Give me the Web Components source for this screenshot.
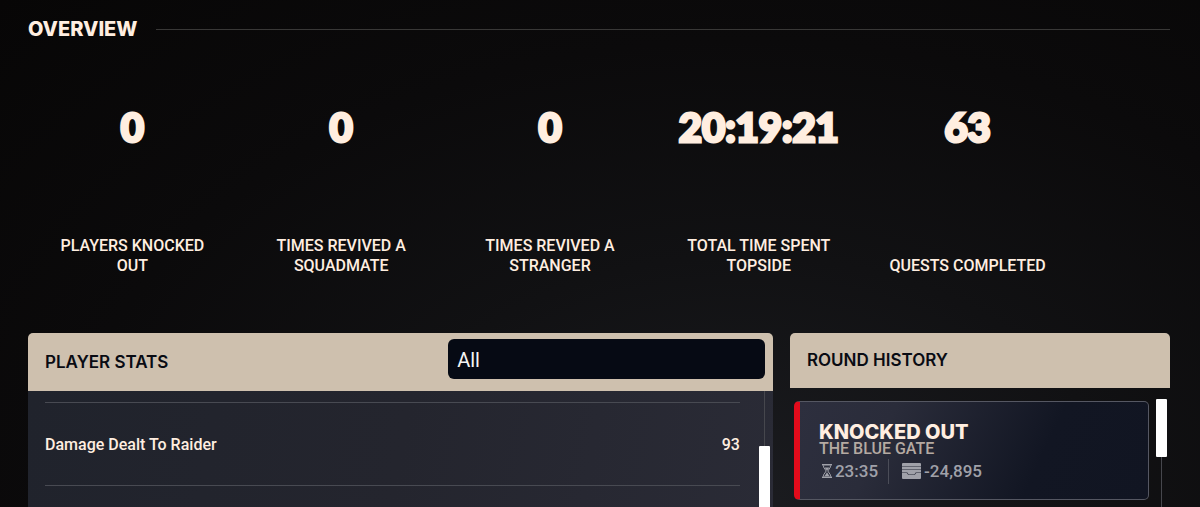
<!DOCTYPE html>
<html lang="en">
<head>
<meta charset="utf-8">
<meta name="viewport" content="width=device-width, initial-scale=1">
<title>Overview</title>
<style>
    :root {
        --cream: #ffeee0;
        --sand: #cec0ae;
        --ink: #090b13;
        --line: #484a52;
        --title-font: Inter, "Open Sans", sans-serif;
        --number-font: Lato, "Open Sans", sans-serif;
        --text-font: Roboto, "Noto Sans", sans-serif;
    }
    body {
        margin: 0;
        height: 100vh;
        overflow: hidden;
        color: var(--cream);
        background: radial-gradient(ellipse at 62% 100%, #1b1c20 0%, #111113 35%, #0b0a0b 65%, #070606 100%);
        font-family: var(--text-font);
    }
</style>
</head>
<body>
<profile-page>
    <section-title>OVERVIEW</section-title>
    <stat-list slot="stats">
        <stat-tile value="0">PLAYERS KNOCKED OUT</stat-tile>
        <stat-tile value="0">TIMES REVIVED A SQUADMATE</stat-tile>
        <stat-tile value="0">TIMES REVIVED A STRANGER</stat-tile>
        <stat-tile value="20:19:21">TOTAL TIME SPENT TOPSIDE</stat-tile>
        <stat-tile value="63">QUESTS COMPLETED</stat-tile>
    </stat-list>
    <player-stats slot="panels"></player-stats>
    <round-history slot="panels">
        <round-card result="KNOCKED OUT" map="THE BLUE GATE" time="23:35" loot="-24,895"></round-card>
    </round-history>
</profile-page>

<script>
// --- <profile-page> ---
class ProfilePage extends HTMLElement {
    constructor() {
        super();
        this.attachShadow({ mode: 'open' }).innerHTML = `
            <style>
                :host { display: flex; flex-direction: column; height: 100%; box-sizing: border-box; padding: 16px 30px 0 28px; }
                .panels { flex: 1; display: grid; grid-template-columns: 1.96fr 1fr; gap: 17px; margin-top: 57px; min-height: 0; }
            </style>
            <slot></slot>
            <slot name="stats"></slot>
            <div class="panels"><slot name="panels"></slot></div>
        `;
    }
}
customElements.define('profile-page', ProfilePage);

// --- <section-title>: heading with a rule that fills the row ---
class SectionTitle extends HTMLElement {
    constructor() {
        super();
        this.attachShadow({ mode: 'open' }).innerHTML = `
            <style>
                :host { display: flex; align-items: center; gap: 18px; }
                h1 { margin: 0; font: 800 20px/26px var(--title-font); }
                hr { flex: 1; margin: 0; border: 0; border-top: 1px solid #393837; }
            </style>
            <h1><slot></slot></h1>
            <hr>
        `;
    }
}
customElements.define('section-title', SectionTitle);

// --- <stat-list> and <stat-tile> ---
class StatList extends HTMLElement {
    constructor() {
        super();
        this.attachShadow({ mode: 'open' }).innerHTML = `
            <style>
                :host { display: grid; grid-template-columns: repeat(5, minmax(0, 1fr)); padding: 60px 98px 0 0; }
            </style>
            <slot></slot>
        `;
    }
}
customElements.define('stat-list', StatList);

class StatTile extends HTMLElement {
    constructor() {
        super();
        this.attachShadow({ mode: 'open' });
    }

    connectedCallback() {
        this.shadowRoot.innerHTML = `
            <style>
                :host { display: flex; flex-direction: column; justify-content: space-between; height: 174px; padding: 0 24px; text-align: center; }
                .value { font: 900 40px/50px var(--number-font); -webkit-text-stroke: 3px currentColor; }
                .label { font: 500 16px/20px var(--text-font); }
            </style>
            <div class="value">${this.getAttribute('value')}</div>
            <div class="label"><slot></slot></div>
        `;
    }
}
customElements.define('stat-tile', StatTile);

// --- <scroll-rail>: thin track with a white thumb ---
class ScrollRail extends HTMLElement {
    constructor() {
        super();
        this.attachShadow({ mode: 'open' }).innerHTML = `
            <style>
                :host { display: block; width: 11px; background: linear-gradient(#46474d, #46474d) center / 1px 100% no-repeat; }
                .thumb { height: var(--thumb-size, 58px); background: #fff; border-radius: 1px; }
            </style>
            <div class="thumb"></div>
        `;
    }
}
customElements.define('scroll-rail', ScrollRail);

// --- <player-stats> ---
class PlayerStats extends HTMLElement {
    constructor() {
        super();
        this.attachShadow({ mode: 'open' }).innerHTML = `
            <style>
                :host { display: flex; flex-direction: column; min-height: 0; border-radius: 5px 5px 0 0; overflow: hidden; }
                header { display: flex; align-items: center; justify-content: space-between; height: 58px; box-sizing: border-box; padding: 0 8px 6px 17px; background: var(--sand); color: var(--ink); }
                label { padding-top: 6px; font: 600 17px/24px var(--title-font); }
                select { appearance: none; width: 44%; height: 40px; margin: 0; padding: 2px 9px 0; border: 0; border-radius: 6px; background: #060a14; color: #f5f5f5; font: 400 20px/24px var(--text-font); }
                .body { flex: 1; display: flex; min-height: 0; background: linear-gradient(100deg, #20232c, #24252e 50%, #2a2b36); }
                table { flex: 1; align-self: flex-start; border-collapse: collapse; margin: 11px 19px 0 17px; }
                tr { height: 83px; border-top: 1px solid var(--line); border-bottom: 1px solid var(--line); }
                th, td { padding: 1px 0 0; font: 500 16px/20px var(--text-font); }
                th { text-align: left; }
                td { text-align: right; }
                scroll-rail { margin-right: 3px; padding-top: 55px; --thumb-size: 300px; }
            </style>
            <header>
                <label for="filter">PLAYER STATS</label>
                <select id="filter"><option>All</option></select>
            </header>
            <div class="body">
                <table>
                    <tbody><tr><th scope="row">Damage Dealt To Raider</th><td>93</td></tr></tbody>
                </table>
                <scroll-rail></scroll-rail>
            </div>
        `;
    }
}
customElements.define('player-stats', PlayerStats);

// --- <round-history> and <round-card> ---
class RoundHistory extends HTMLElement {
    constructor() {
        super();
        this.attachShadow({ mode: 'open' }).innerHTML = `
            <style>
                :host { display: flex; flex-direction: column; min-height: 0; }
                h2 { margin: 0; padding: 15px 17px 16px; border-radius: 5px 5px 0 0; background: var(--sand); color: var(--ink); font: 600 17px/24px var(--title-font); }
                .body { flex: 1; display: flex; gap: 7px; padding: 11px 3px 0 4px; min-height: 0; }
                .rounds { flex: 1; padding-top: 2px; }
            </style>
            <h2>ROUND HISTORY</h2>
            <div class="body">
                <div class="rounds"><slot></slot></div>
                <scroll-rail></scroll-rail>
            </div>
        `;
    }
}
customElements.define('round-history', RoundHistory);

class RoundCard extends HTMLElement {
    constructor() {
        super();
        this.attachShadow({ mode: 'open' });
    }

    connectedCallback() {
        this.shadowRoot.innerHTML = `
            <style>
                :host { display: block; box-sizing: border-box; padding: 20px 18px 15px 19px; border: 1px solid #555762; border-left: 6px solid #e30b1b; border-radius: 5px; background: linear-gradient(115deg, #2d2f3e 0%, #2a2c3a 25%, #121623 68%, #111522 100%); }
                h3 { margin: 0; font: 800 20px/20px var(--title-font); }
                p { margin: 0; color: #b5aaa2; font: 500 16px/14px var(--text-font); }
                .meta { display: flex; align-items: center; margin-top: 2px; height: 26px; color: #a0a1a9; font: 500 17px/20px var(--text-font); }
                .time { display: flex; align-items: center; gap: 3px; padding: 0 10px 0 3px; border-right: 1px solid #4b4d58; line-height: 25px; }
                .loot { display: flex; align-items: center; gap: 3px; padding-left: 13px; }
                svg { display: block; fill: currentColor; }
            </style>
            <h3>${this.getAttribute('result')}</h3>
            <p>${this.getAttribute('map')}</p>
            <div class="meta">
                <span class="time">
                    <svg width="10" height="14" viewBox="0 0 10 14" aria-hidden="true">
                        <path d="M0 0h10v1.6H0zM0 12.4h10V14H0z"/>
                        <path d="M1.6 1.5v1.7L4.2 7 1.6 10.8v1.7M8.4 1.5v1.7L5.8 7l2.6 3.8v1.7" fill="none" stroke="currentColor"/>
                        <path d="M2.5 3.5h5L5 6.8zM5 8.2l2.5 4h-5z"/>
                    </svg>
                    ${this.getAttribute('time')}
                </span>
                <span class="loot">
                    <svg width="19" height="16" viewBox="0 0 19 16" aria-hidden="true">
                        <path d="M1 0h17a1 1 0 0 1 1 1v2.400H0V1a1 1 0 0 1 1-1zM0 4h19v2.400H0zM0 7h19v2.400h-5c-1 0-1 2-2 2H7c-1 0-1-2-2-2H0zM0 10h4.500c1 0 1 2 2.500 2h5c1.500 0 1.500-2 2.500-2H19v5a1 1 0 0 1-1 1H1a1 1 0 0 1-1-1z"/>
                    </svg>
                    ${this.getAttribute('loot')}
                </span>
            </div>
        `;
    }
}
customElements.define('round-card', RoundCard);
</script>
</body>
</html>
